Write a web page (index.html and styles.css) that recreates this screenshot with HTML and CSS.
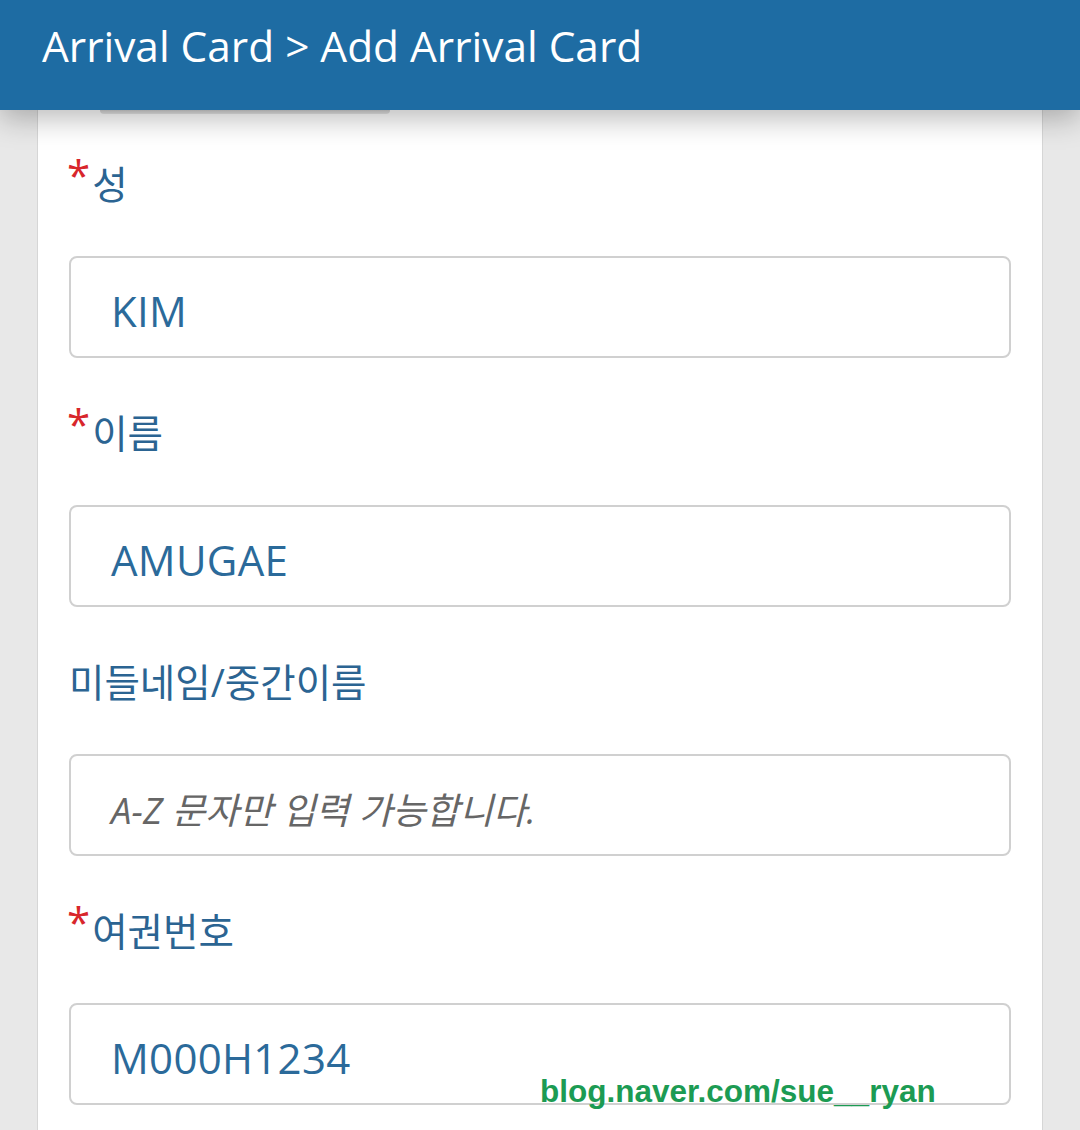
FILE: index.html
```html
<!DOCTYPE html>
<html lang="ko">
<head>
<meta charset="utf-8">
<title>Add Arrival Card</title>
<link rel="stylesheet" href="styles.css">
</head>
<body>
<header class="topbar">
  <h1 class="title">Arrival Card &gt; Add Arrival Card</h1>
</header>
<main class="card">
  <div class="peek"></div>
  <form class="form">
    <div class="field">
      <label class="label"><span class="req">*</span>성</label>
      <div class="input"><span class="value">KIM</span></div>
    </div>
    <div class="field">
      <label class="label"><span class="req">*</span>이름</label>
      <div class="input"><span class="value">AMUGAE</span></div>
    </div>
    <div class="field">
      <label class="label label-plain">미들네임/중간이름</label>
      <div class="input"><span class="placeholder">A-Z 문자만 입력 가능합니다.</span></div>
    </div>
    <div class="field">
      <label class="label"><span class="req">*</span>여권번호</label>
      <div class="input"><span class="value">M000H1234</span></div>
    </div>
  </form>
</main>
<div class="watermark">blog.naver.com/sue__ryan</div>
</body>
</html>
```

FILE: styles.css
```css
html, body {
  margin: 0;
  padding: 0;
}
body {
  background: #e8e8e8;
  font-family: "Open Sans", "Noto Sans CJK KR", sans-serif;
  height: 1130px;
  overflow: hidden;
  position: relative;
}
.topbar {
  position: relative;
  z-index: 2;
  height: 110px;
  background: #1e6ca3;
  box-shadow: 0 8px 28px rgba(0, 0, 0, 0.28);
  display: flex;
  align-items: flex-start;
  padding-left: 42px;
}
.title {
  margin: 0;
  padding-top: 20px;
  font-weight: 400;
  font-size: 42.4px;
  line-height: 52px;
  color: #ffffff;
}
.card {
  position: relative;
  z-index: 1;
  margin: 0 37px;
  background: #ffffff;
  border-left: 1px solid #d6d6d6;
  border-right: 1px solid #d6d6d6;
  height: 1020px;
}
.peek {
  margin-left: 62px;
  width: 290px;
  height: 4px;
  background: linear-gradient(#c4c4c4, #e2e2e2);
  border-radius: 0 0 14px 14px;
  opacity: 0.8;
}
.form {
  padding: 44px 31px 0 31px;
}
.field {
  margin-bottom: 49px;
}
.label {
  display: flex;
  align-items: flex-start;
  font-size: 38.5px;
  line-height: 52px;
  height: 52px;
  color: #2b6492;
  margin-bottom: 46px;
}
.req {
  color: #d8262b;
  font-size: 42px;
  line-height: 1;
  margin: -4px 2px 0 -2px;
}
.input {
  height: 92px;
  border: 2px solid #d0d0d0;
  border-radius: 8px;
  display: flex;
  align-items: center;
  padding: 6px 0 0 40px;
}
.value {
  font-size: 42px;
  color: #2b6a9a;
  letter-spacing: 0.3px;
}
.placeholder {
  font-size: 36.5px;
  font-style: italic;
  color: #666666;
}
.watermark {
  position: absolute;
  left: 540px;
  top: 1073px;
  z-index: 3;
  font-family: "Liberation Sans", sans-serif;
  font-weight: 700;
  font-size: 31.5px;
  color: #1c9b53;
}
```
